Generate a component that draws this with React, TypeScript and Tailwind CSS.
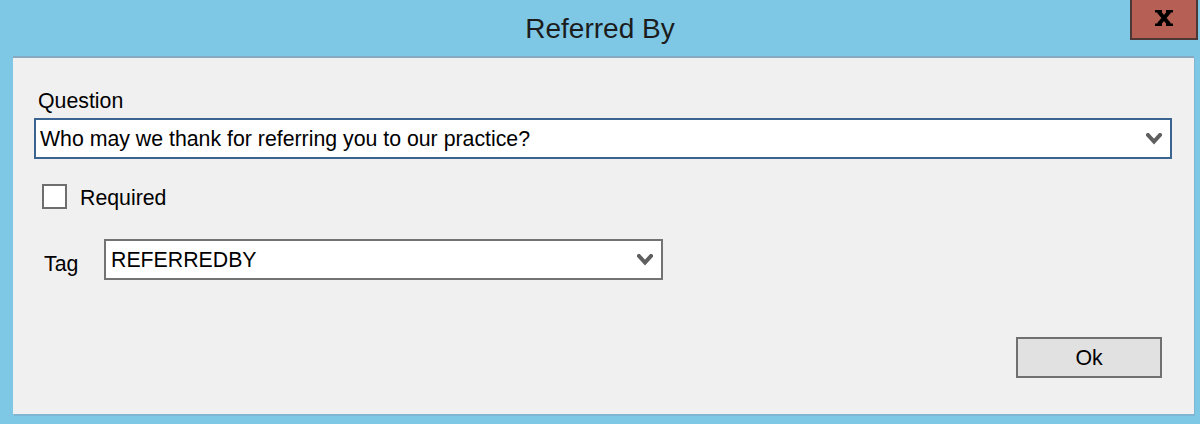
import React from 'react';

const Chevron: React.FC = () => (
  <svg width="16" height="12" viewBox="0 0 16 12" className="shrink-0">
    <path d="M2 2 L8 8.5 L14 2" fill="none" stroke="#5f5f5f" strokeWidth="4" strokeLinecap="square" />
  </svg>
);

const CloseGlyph: React.FC = () => (
  <svg width="18" height="16" viewBox="0 0 18 16">
    <path d="M3.5 1.5 L14.5 14.5 M14.5 1.5 L3.5 14.5" stroke="#000" strokeWidth="4" fill="none" />
    <rect x="0" y="0" width="7" height="2.5" fill="#000" />
    <rect x="11" y="0" width="7" height="2.5" fill="#000" />
    <rect x="0" y="13.5" width="7" height="2.5" fill="#000" />
    <rect x="11" y="13.5" width="7" height="2.5" fill="#000" />
  </svg>
);

export default function App() {
  return (
    <div className="w-[1200px] h-[424px] bg-[#7ec8e6] flex flex-col font-['Liberation_Sans',Arial,sans-serif] text-black overflow-hidden">
      {/* title bar */}
      <div className="relative h-[56px] flex justify-center">
        <div className="pt-[13px] text-[28px] leading-[32px] text-[#1c1c1c]">Referred By</div>
        <div className="absolute right-[2px] top-0 w-[68px] h-[40px] bg-[#b65f55] border-2 border-t-0 border-[#4d3636] flex items-center justify-center">
          <div className="mb-[3px]">
            <CloseGlyph />
          </div>
        </div>
      </div>

      {/* client area */}
      <div className="ml-[13px] w-[1181px] h-[358px] bg-[#f0f0f0] border-t-2 border-[#88a9c2] shadow-[1px_2px_0_#80b6d3] flex flex-col text-[21.3px] leading-[24px]">
        <div className="mt-[31px] ml-[25px]">Question</div>

        <div className="mt-[5px] ml-[21px] w-[1138px] h-[41px] bg-white border-2 border-[#3b6590] flex items-center pl-[4px] pr-[8px]">
          <span className="flex-1 whitespace-nowrap">Who may we thank for referring you to our practice?</span>
          <Chevron />
        </div>

        <div className="mt-[25px] ml-[29px] flex items-start">
          <div className="w-[25px] h-[25px] bg-white border-2 border-[#6e6e6e]" />
          <span className="ml-[13px] mt-[2px]">Required</span>
        </div>

        <div className="mt-[29px] ml-[31px] flex items-start">
          <span className="w-[60px] mt-[13px]">Tag</span>
          <div className="w-[559px] h-[41px] bg-white border-2 border-[#737373] flex items-center pl-[5px] pr-[8px]">
            <span className="flex-1">REFERREDBY</span>
            <Chevron />
          </div>
        </div>

        <div className="mt-[57px] pr-[32px] flex justify-end">
          <button className="w-[146px] h-[41px] bg-[#e1e1e1] border-2 border-[#707070] flex items-center justify-center text-[21.3px] leading-[24px]">
            Ok
          </button>
        </div>
      </div>
    </div>
  );
}
